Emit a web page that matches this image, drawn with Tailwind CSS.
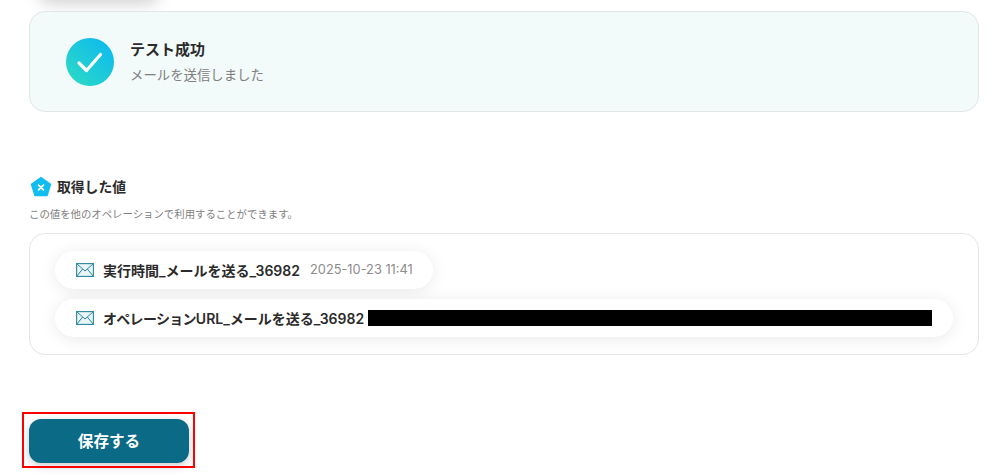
<!DOCTYPE html>
<html lang="ja">

<head>
    <meta charset="UTF-8" />
    <meta name="viewport" content="width=device-width, initial-scale=1" />
    <title>テスト成功</title>
    <script src="https://cdn.jsdelivr.net/npm/@tailwindcss/browser@4"></script>
</head>

<body class="h-[476px] overflow-hidden bg-white text-[#2b2b2b] font-['Inter','Noto_Sans_CJK_JP',sans-serif]">
    <div class="h-[476px] overflow-hidden px-[29px]">
        <!-- previous button, only its shadow shows -->
        <div class="w-[120px] h-[40px] -mt-[40px] ml-[10px] rounded-xl bg-white shadow-[0_4px_16px_rgba(0,0,0,0.18)]"></div>

        <div class="mt-[11px] w-[950px] h-[101px] flex items-center gap-4 pl-[36px] rounded-2xl border border-[#e2e6e8] bg-[#f2fafa]">
            <div class="w-12 h-12 rounded-full flex items-center justify-center bg-gradient-to-tr from-[#2fdcc0] to-[#0fb6f2]">
                <svg width="28" height="28" viewBox="0 0 28 28" fill="none">
                    <path d="M3 15 L10.5 22.5 L24.5 6.5" stroke="#fff" stroke-width="3.2" stroke-linecap="round" stroke-linejoin="round" />
                </svg>
            </div>
            <div class="pt-[1px]">
                <p class="text-[15px] leading-[22px] font-bold">テスト成功</p>
                <p class="mt-[3px] text-[13.4px] leading-[22px] text-[#808080]">メールを送信しました</p>
            </div>
        </div>

        <div class="mt-[64px] flex items-center gap-[5px] pl-[1px]">
            <svg width="22" height="22" viewBox="0 0 22 22">
                <path d="M11 1.5 L20.5 8.3 L17 19.5 L5 19.5 L1.5 8.3 Z" fill="#12bdf0" stroke="#12bdf0" stroke-width="1.5" stroke-linejoin="round" />
                <path d="M8.6 9.2 L13.4 13.8 M13.4 9.2 L8.6 13.8" stroke="#fff" stroke-width="1.7" stroke-linecap="round" />
            </svg>
            <h3 class="text-[13.8px] leading-[22px] font-bold">取得した値</h3>
        </div>
        <p class="mt-[10px] text-[10.4px] leading-[14px] text-[#808080]">この値を他のオペレーションで利用することができます。</p>

        <div class="mt-[11px] w-[950px] h-[122px] flex flex-col items-start gap-[10px] pl-[25px] pt-[17px] rounded-2xl border border-[#e6e6e6] bg-white">
            <div class="h-[38px] w-[378px] flex items-center rounded-full bg-white pl-[21px] shadow-[0_2px_16px_rgba(0,0,0,0.09)]">
                <svg width="18" height="14" viewBox="0 0 18 14" fill="none" class="shrink-0">
                    <rect x="0.6" y="0.6" width="16.8" height="12.8" fill="#eaf5f8" stroke="#2a86a0" stroke-width="1.1" />
                    <path d="M0.8 0.8 L9 8 L17.2 0.8 M0.8 13.2 L6.6 6 M17.2 13.2 L11.4 6" stroke="#2a86a0" stroke-width="1" />
                </svg>
                <span class="ml-[9px] text-[14px] font-semibold whitespace-nowrap">実行時間_メールを送る_36982</span>
                <span class="ml-[10px] text-[12.8px] text-[#8c8c8c] whitespace-nowrap">2025-10-23 11:41</span>
            </div>
            <div class="h-[38px] w-[898px] flex items-center rounded-full bg-white pl-[21px] shadow-[0_2px_16px_rgba(0,0,0,0.09)]">
                <svg width="18" height="14" viewBox="0 0 18 14" fill="none" class="shrink-0">
                    <rect x="0.6" y="0.6" width="16.8" height="12.8" fill="#eaf5f8" stroke="#2a86a0" stroke-width="1.1" />
                    <path d="M0.8 0.8 L9 8 L17.2 0.8 M0.8 13.2 L6.6 6 M17.2 13.2 L11.4 6" stroke="#2a86a0" stroke-width="1" />
                </svg>
                <span class="ml-[9px] text-[14px] font-semibold whitespace-nowrap"><span class="tracking-[-0.7px]">オペレーション</span>URL_メールを送る_36982</span>
                <div class="ml-[4px] w-[564px] h-[16px] bg-black"></div>
            </div>
        </div>

        <div class="relative mt-[64px] w-[160px]">
            <button class="w-[160px] h-[44px] pt-[1px] rounded-xl bg-[#0b6a85] text-white text-[15.6px] font-bold shadow-[0_3px_10px_rgba(0,0,0,0.2)]">保存する</button>
            <!-- red annotation frame -->
            <div class="absolute -left-[7px] -top-[7px] -right-[6px] -bottom-[5px] border-2 border-[#ff0000]"></div>
        </div>
    </div>
</body>

</html>
